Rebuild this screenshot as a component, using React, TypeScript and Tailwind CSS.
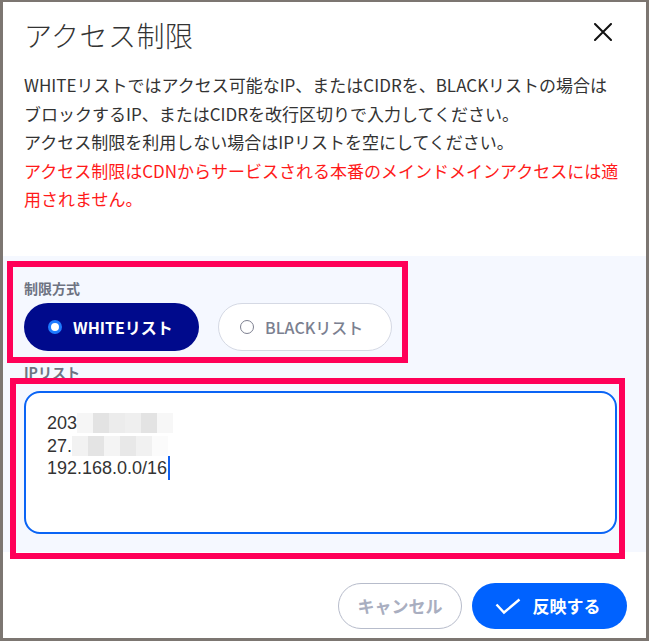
import { useState } from 'react';

const jp = "font-['Noto_Sans_CJK_JP','Noto_Sans',sans-serif]";

function Mosaic({ cells }: { cells: string[] }) {
  return (
    <span className="inline-flex align-middle">
      {cells.map((c, i) => (
        <span key={i} className="inline-block w-[16px] h-[20px]" style={{ background: c }} />
      ))}
    </span>
  );
}

function Radio({ active }: { active: boolean }) {
  return active ? (
    <span className="w-[14px] h-[14px] rounded-full bg-white border-[3px] border-[#1e7bff] box-border" />
  ) : (
    <span className="w-[14px] h-[14px] rounded-full bg-white border-[1.5px] border-[#7d8090] box-border" />
  );
}

export default function App() {
  const [mode, setMode] = useState<'white' | 'black'>('white');

  return (
    <div className={`w-[649px] h-[641px] bg-[#7c7671] pt-[2px] pl-[3px] pr-[3px] pb-[3px] relative ${jp}`}>
      <div className="bg-white h-full flex flex-col">
        {/* Header */}
        <div className="h-[66px] flex items-center justify-between pl-[21px] pr-[34px]">
          <h2 className="text-[28px] font-light text-[#333] tracking-[0.5px]">アクセス制限</h2>
          <svg width="18" height="18" viewBox="0 0 18 18" className="mt-[-6px]">
            <path d="M1 1 L17 17 M17 1 L1 17" stroke="#111" strokeWidth="2" strokeLinecap="round" />
          </svg>
        </div>

        {/* Description */}
        <div className="pl-[21px] pr-[26px] pt-[3px] text-[17px] leading-[28.5px] text-[#333] h-[188px]">
          <p>WHITEリストではアクセス可能なIP、またはCIDRを、BLACKリストの場合はブロックするIP、またはCIDRを改行区切りで入力してください。</p>
          <p>アクセス制限を利用しない場合はIPリストを空にしてください。</p>
          <p className="text-[#ff1a1a]">アクセス制限はCDNからサービスされる本番のメインドメインアクセスには適用されません。</p>
        </div>

        {/* Form */}
        <div className="bg-[#f5f8ff] pl-[21px] pr-[29px] pt-[22px] pb-[18px]">
          <div className="text-[14px] leading-[20px] font-bold text-[#6e7382]">制限方式</div>
          <div className="flex gap-[19px] mt-[5px]">
            <button
              onClick={() => setMode('white')}
              className={`w-[175px] h-[48px] rounded-full flex items-center gap-[11px] pl-[24px] text-[16px] font-bold ${
                mode === 'white' ? 'bg-[#000a8c] text-white' : 'bg-white border border-[#d5d9e4] text-[#7b8090]'
              }`}
            >
              <Radio active={mode === 'white'} />
              WHITEリスト
            </button>
            <button
              onClick={() => setMode('black')}
              className={`w-[174px] h-[48px] rounded-full flex items-center gap-[11px] pl-[21px] text-[16px] font-medium ${
                mode === 'black' ? 'bg-[#000a8c] text-white' : 'bg-white border border-[#d5d9e4] text-[#7b8090]'
              }`}
            >
              <Radio active={mode === 'black'} />
              BLACKリスト
            </button>
          </div>

          <div className="text-[14px] leading-[20px] font-bold text-[#6e7382] mt-[11px]">IPリスト</div>
          <div className="mt-[9px] h-[143px] bg-white border-2 border-[#0a64f5] rounded-[16px] pl-[21px] pt-[19px] text-[18px] leading-[22.5px] text-[#333] font-['Liberation_Sans',Arial,sans-serif]">
            <div className="flex items-center h-[22.5px]">
              203
              <Mosaic cells={['#f6f6f6', '#e3e3e3', '#ececec', '#efefef', '#e3e3e3', '#f7f7f7']} />
            </div>
            <div className="flex items-center h-[22.5px]">
              27.
              <Mosaic cells={['#f2f2f2', '#e4e4e4', '#f4f4f4', '#e8e8e8', '#f1f1f1', '#fbfbfb']} />
            </div>
            <div className="flex items-center h-[22.5px]">
              192.168.0.0/16
              <span className="inline-block w-[1.5px] h-[24px] bg-[#1060f0] ml-[1px]" />
            </div>
          </div>
        </div>

        {/* Footer */}
        <div className="flex justify-end gap-[10px] pt-[31px] pr-[19px]">
          <button className="w-[124px] h-[46px] rounded-full border border-[#b7bccb] text-[17px] font-bold text-[#a9aec0]">
            キャンセル
          </button>
          <button className="w-[155px] h-[46px] rounded-full bg-[#0062ff] text-white text-[17px] font-bold flex items-center justify-center gap-[12px] pr-[4px]">
            <svg width="26" height="17" viewBox="0 0 26 17">
              <path d="M1.5 6.5 L9 14.5 L24.5 1.5" fill="none" stroke="white" strokeWidth="2.4" />
            </svg>
            反映する
          </button>
        </div>
      </div>

      {/* annotation boxes */}
      <div className="absolute left-[7px] top-[261px] w-[401px] h-[102px] border-[6px] border-[#ff0058]" />
      <div className="absolute left-[10px] top-[378px] w-[615px] h-[181px] border-[6px] border-[#ff0058]" />
    </div>
  );
}
